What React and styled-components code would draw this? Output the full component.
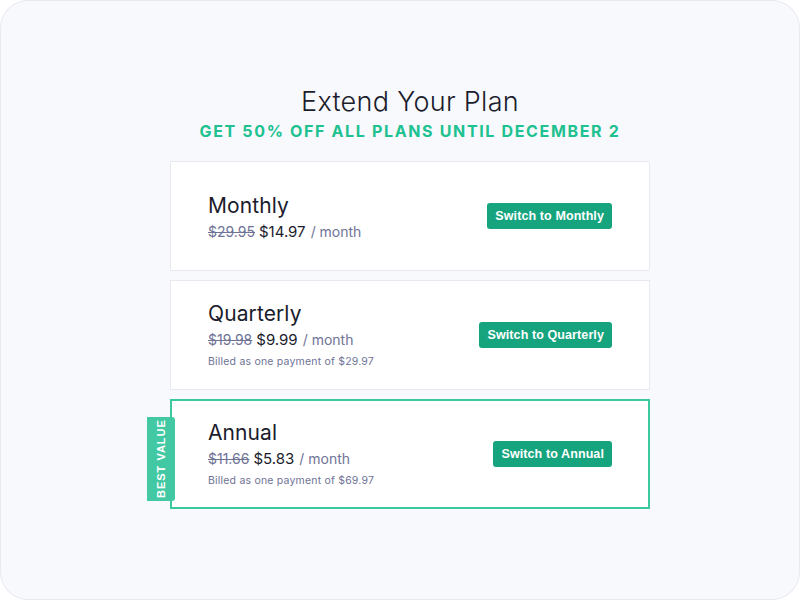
import styled, { createGlobalStyle } from 'styled-components'

const GlobalStyle = createGlobalStyle`
  html, body {
    margin: 0;
    padding: 0;
    background: #ffffff;
  }
  * { box-sizing: border-box; }
`

const plans = [
  { name: 'Monthly', old: '$29.95', price: '$14.97', button: 'Switch to Monthly' },
  { name: 'Quarterly', old: '$19.98', price: '$9.99', billed: '$29.97', button: 'Switch to Quarterly' },
  { name: 'Annual', old: '$11.66', price: '$5.83', billed: '$69.97', button: 'Switch to Annual', best: true },
]

export default function App() {
  return (
    <>
      <GlobalStyle />
      <Frame>
        <Title>Extend Your Plan</Title>
        <Promo>Get 50% off all plans until December 2</Promo>
        <CardList>
          {plans.map((plan) => (
            <Card key={plan.name} $highlight={plan.best}>
              {plan.best && <Ribbon>Best Value</Ribbon>}
              <Info>
                <PlanName>{plan.name}</PlanName>
                <PriceLine>
                  <OldPrice>{plan.old}</OldPrice>
                  <Price>{plan.price}</Price>
                  <Per>/ month</Per>
                </PriceLine>
                {plan.billed && <Billed>Billed as one payment of {plan.billed}</Billed>}
              </Info>
              <SwitchButton>{plan.button}</SwitchButton>
            </Card>
          ))}
        </CardList>
      </Frame>
    </>
  )
}

const Frame = styled.div`
  width: 800px;
  height: 600px;
  border: 1px solid #e7e9f1;
  border-radius: 28px;
  background: #f8f9fd;
  display: flex;
  flex-direction: column;
  align-items: center;
  padding: 85px 0 0 20px;
  font-family: Inter, "Liberation Sans", sans-serif;
`

const Title = styled.h1`
  margin: 0;
  font-size: 27px;
  line-height: 32px;
  font-weight: 300;
  color: #1b1c2c;
  letter-spacing: 0.3px;
`

const Promo = styled.div`
  margin-top: 3px;
  font-size: 16px;
  line-height: 20px;
  font-weight: 700;
  text-transform: uppercase;
  letter-spacing: 1.65px;
  color: #20c190;
`

const CardList = styled.div`
  margin-top: 20px;
  width: 480px;
  display: flex;
  flex-direction: column;
  gap: 9px;
`

const Card = styled.div`
  position: relative;
  height: 110px;
  background: #ffffff;
  border: ${(p) => (p.$highlight ? '2px solid #3dc9a0' : '1px solid #e8e9f1')};
  display: flex;
  align-items: center;
  justify-content: space-between;
  padding: 0 ${(p) => (p.$highlight ? 36 : 37)}px;
`

const Ribbon = styled.div`
  position: absolute;
  left: -25px;
  top: 16px;
  width: 28px;
  height: 84px;
  background: #42c9a3;
  border-radius: 3px 0 0 3px;
  color: #ffffff;
  font-family: "Liberation Sans", Arial, sans-serif;
  font-size: 11px;
  font-weight: 700;
  letter-spacing: 1px;
  text-transform: uppercase;
  writing-mode: vertical-rl;
  transform: rotate(180deg);
  display: flex;
  align-items: center;
  justify-content: center;
`

const Info = styled.div`
  display: flex;
  flex-direction: column;
  padding-top: 2px;
`

const PlanName = styled.div`
  font-size: 21px;
  line-height: 26px;
  font-weight: 400;
  color: #1b1c2c;
  letter-spacing: 0.1px;
`

const PriceLine = styled.div`
  margin-top: 3px;
  display: flex;
  align-items: baseline;
  gap: 4px;
  line-height: 20px;
`

const OldPrice = styled.span`
  font-size: 14px;
  color: #6f7396;
  text-decoration: line-through;
`

const Price = styled.span`
  font-size: 15px;
  color: #1b1c2c;
`

const Per = styled.span`
  font-size: 14px;
  color: #6f7396;
  margin-left: 1px;
`

const Billed = styled.div`
  margin-top: 3px;
  font-size: 10.5px;
  line-height: 18px;
  color: #6f7396;
  letter-spacing: 0.2px;
`

const SwitchButton = styled.button`
  height: 26px;
  padding: 0 8px;
  border: none;
  border-radius: 3px;
  background: #15a47e;
  color: #ffffff;
  font-family: "Liberation Sans", Arial, sans-serif;
  font-size: 12.5px;
  font-weight: 700;
  letter-spacing: 0.1px;
  cursor: pointer;
`
